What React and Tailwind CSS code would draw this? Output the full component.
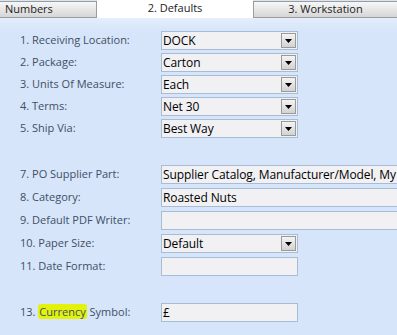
import React from "react";

const font = { fontFamily: '"Open Sans", "Noto Sans", sans-serif' };

const Arrow = () => (
  <span className="flex h-[15px] w-[15px] shrink-0 items-center justify-center border border-[#9a9a9a] bg-gradient-to-b from-[#f4f4f4] to-[#d2d2d2]">
    <svg width="7" height="4" viewBox="0 0 7 4">
      <path d="M0 0h7L3.5 4z" fill="#000" />
    </svg>
  </span>
);

const Field = ({ value, combo, wide }) => (
  <div
    className={`flex h-[19px] shrink-0 items-center justify-between border border-[#a9bcd6] bg-[#f1f1f3] pl-[1px] pr-[1px] text-[12px] leading-none tracking-[-0.1px] text-black ${
      wide ? "w-[260px] border-r-0" : "w-[137px]"
    }`}
  >
    <span className="whitespace-nowrap">{value}</span>
    {combo && <Arrow />}
  </div>
);

const Row = ({ label, ...rest }) => (
  <div className="flex items-center">
    <div className="w-[161px] shrink-0 pl-[20px] text-[11px] text-[#3f4f66]">{label}</div>
    <Field {...rest} />
  </div>
);

const groupOne = [
  { label: "1. Receiving Location:", value: "DOCK", combo: true },
  { label: "2. Package:", value: "Carton", combo: true },
  { label: "3. Units Of Measure:", value: "Each", combo: true },
  { label: "4. Terms:", value: "Net 30", combo: true },
  { label: "5. Ship Via:", value: "Best Way", combo: true },
];

const groupTwo = [
  { label: "7. PO Supplier Part:", value: "Supplier Catalog, Manufacturer/Model, My", wide: true },
  { label: "8. Category:", value: "Roasted Nuts", wide: true },
  { label: "9. Default PDF Writer:", value: "", wide: true },
  { label: "10. Paper Size:", value: "Default", combo: true },
  { label: "11. Date Format:", value: "" },
];

export default function App() {
  return (
    <div className="h-[335px] w-[397px] overflow-hidden bg-[#d6e5f9]" style={font}>
      <div className="flex h-[18px] items-end bg-[#d6e5f9]">
        <div className="flex h-[17px] w-[97px] items-center border border-l-0 border-[#9c9c9c] bg-gradient-to-b from-[#f7f7f7] to-[#d6d6d6] pl-[5px] text-[11px] text-[#222]">
          Numbers
        </div>
        <div className="flex h-[18px] w-[156px] items-center justify-center bg-white pb-[2px] text-[11px] text-[#222]">
          2. Defaults
        </div>
        <div className="flex h-[17px] flex-1 items-center justify-center border border-r-0 border-[#9c9c9c] bg-gradient-to-b from-[#f7f7f7] to-[#d6d6d6] text-[11px] text-[#222]">
          3. Workstation
        </div>
      </div>
      <div className="h-[13px] bg-gradient-to-b from-[#e4eefc] to-[#d6e5f9]" />
      <div className="flex flex-col gap-[3px]">
        {groupOne.map((r) => (
          <Row key={r.label} {...r} />
        ))}
      </div>
      <div className="mt-[27px] flex flex-col gap-[4px]">
        {groupTwo.map((r) => (
          <Row key={r.label} {...r} />
        ))}
      </div>
      <div className="mt-[27px] flex items-center">
        <div className="w-[161px] shrink-0 pl-[20px] text-[11px] text-[#3f4f66]">
          13. <span className="rounded-[3px] bg-[#e3f20a] px-[1px]">Currency</span> Symbol:
        </div>
        <Field value="£" />
      </div>
    </div>
  );
}
